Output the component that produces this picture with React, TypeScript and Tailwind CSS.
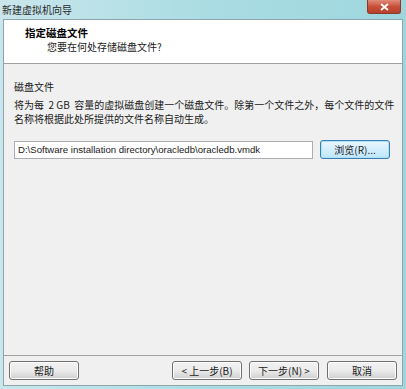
import React from "react";

const font = { fontFamily: '"Noto Sans CJK SC", "Liberation Sans", sans-serif' };

function Btn({ children, className = "", primary = false }: { children: React.ReactNode; className?: string; primary?: boolean }) {
  return (
    <div
      className={
        "h-[19px] flex items-center justify-center rounded-[3px] border text-[10px] text-[#1a1a1a] leading-none " +
        (primary
          ? "border-[#3c7fb1] bg-gradient-to-b from-[#eaf6fd] to-[#bee6fd] shadow-[inset_0_0_0_1px_#aee1f8] "
          : "border-[#707070] bg-gradient-to-b from-[#f2f2f2] via-[#ebebeb] to-[#cfcfcf] shadow-[inset_0_0_0_1px_#fcfcfc] ") +
        className
      }
    >
      {children}
    </div>
  );
}

export default function App() {
  return (
    <div
      className="w-[406px] h-[389px] flex flex-col bg-gradient-to-r from-[#c9e6ec] via-[#aadde3] to-[#9fd6de] overflow-hidden"
      style={font}
    >
      <div className="h-[19px] relative flex items-center pl-[2px]">
        <span className="text-[10px] text-[#2a2a2a] leading-none">新建虚拟机向导</span>
        <div className="absolute right-[5px] top-0 w-[34px] h-[14px] rounded-b-[3px] border border-t-0 border-[#8a3a2a] bg-gradient-to-b from-[#e08c78] via-[#c8503a] to-[#b8402c] flex items-center justify-center">
          <svg width="9" height="8" viewBox="0 0 9 8">
            <path d="M1 1 L8 7 M8 1 L1 7" stroke="#ffffff" strokeWidth="1.8" />
          </svg>
        </div>
      </div>
      <div className="flex-1 mx-[3px] mb-[3px] border border-[#8ca6ac] bg-[#f0f0f0] flex flex-col">
        <div className="h-[44px] bg-white border-b border-[#a0a0a0] flex flex-col pl-[21px] pt-[6px]">
          <div className="text-[10.5px] font-bold text-black leading-[14px]">指定磁盘文件</div>
          <div className="text-[10px] text-[#1a1a1a] leading-[14px] pl-[22px]">您要在何处存储磁盘文件?</div>
        </div>
        <div className="flex-1 flex flex-col pl-[10px] pr-[12px] pt-[16px]">
          <div className="text-[10px] text-[#1a1a1a] leading-[14px]">磁盘文件</div>
          <div className="text-[10px] text-[#1a1a1a] leading-[14px] mt-[4px] whitespace-nowrap">
            将为每&nbsp;&nbsp;2 GB&nbsp;&nbsp;容量的虚拟磁盘创建一个磁盘文件。除第一个文件之外，每个文件的文件
            <br />
            名称将根据此处所提供的文件名称自动生成。
          </div>
          <div className="flex items-center mt-[14px] gap-[7px]">
            <div className="w-[300px] h-[18px] bg-white border border-[#abadb3] flex items-center pl-[3px]">
              <span className="text-[9.6px] text-[#1a1a1a] leading-none" style={{ fontFamily: '"Liberation Sans", sans-serif' }}>
                D:\Software installation directory\oracledb\oracledb.vmdk
              </span>
            </div>
            <Btn primary className="w-[70px]">浏览(R)...</Btn>
          </div>
        </div>
        <div className="h-[30px] border-t border-[#a0a0a0] flex items-center pl-[5px] pr-[5px]">
          <Btn className="w-[70px]">帮助</Btn>
          <div className="flex-1" />
          <Btn className="w-[70px]">&lt; 上一步(B)</Btn>
          <Btn className="w-[70px] ml-[7px]">下一步(N) &gt;</Btn>
          <Btn className="w-[70px] ml-[8px]">取消</Btn>
        </div>
      </div>
    </div>
  );
}
